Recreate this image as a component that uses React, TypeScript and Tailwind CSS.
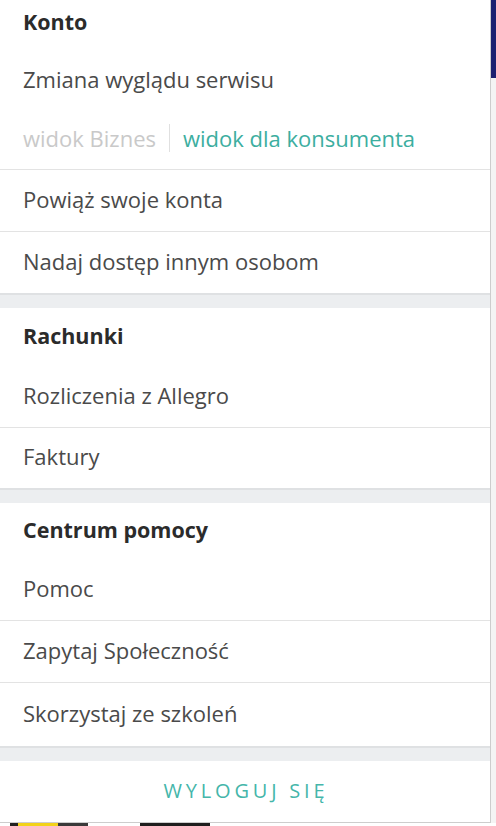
const rowText = "text-[22px] text-[#4a4a4a] pb-[4px]"

function Header({ label, className }: { label: string; className: string }) {
  return (
    <div className={`flex px-[23px] ${className}`}>
      <span className="text-[21.5px] font-bold text-[#2b2b2b]">{label}</span>
    </div>
  )
}

function Item({ label, className, divider = true }: { label: string; className: string; divider?: boolean }) {
  return (
    <a
      href="#"
      className={`flex items-center px-[23px] ${rowText} ${divider ? "border-b border-[#e3e3e3]" : ""} ${className}`}
    >
      {label}
    </a>
  )
}

function Band({ className }: { className: string }) {
  return <div className={`border-t-2 border-[#dfe1e3] bg-[#eceef0] ${className}`} />
}

export default function App() {
  return (
    <div className="flex h-[826px] w-[496px] flex-col overflow-hidden bg-white font-['Open_Sans',sans-serif] leading-none">
      <div className="flex h-[823px]">
        <nav className="flex w-[491px] flex-col border-r border-b border-[#cdcdcd] bg-white">
          <Header label="Konto" className="h-[52px] items-start pt-[11px]" />
          <div className={`flex h-[58px] items-center px-[23px] ${rowText}`}>Zmiana wyglądu serwisu</div>
          <div className="flex h-[60px] items-center border-b border-[#e3e3e3] px-[23px] pb-[4px] text-[22px]">
            <span className="text-[#c9c9c9]">widok Biznes</span>
            <span className="mx-[13px] h-[28px] w-px bg-[#e0e0e0]" />
            <span className="text-[#3cae9f]">widok dla konsumenta</span>
          </div>
          <Item label="Powiąż swoje konta" className="h-[62px]" />
          <Item label="Nadaj dostęp innym osobom" className="h-[61px]" divider={false} />
          <Band className="h-[15px]" />

          <Header label="Rachunki" className="h-[58px] items-center pb-[2px]" />
          <Item label="Rozliczenia z Allegro" className="h-[62px]" />
          <Item label="Faktury" className="h-[60px]" divider={false} />
          <Band className="h-[15px]" />

          <Header label="Centrum pomocy" className="h-[56px] items-center pb-[2px]" />
          <Item label="Pomoc" className="h-[62px]" />
          <Item label="Zapytaj Społeczność" className="h-[62px]" />
          <Item label="Skorzystaj ze szkoleń" className="h-[63px]" divider={false} />
          <Band className="h-[15px]" />

          <a
            href="#"
            className="flex flex-1 items-center justify-center pb-[2px] pl-[2px] text-[20px] tracking-[0.19em] text-[#45b6aa]"
          >
            WYLOGUJ SIĘ
          </a>
        </nav>
        <div className="flex flex-1 flex-col">
          <div className="h-[78px] bg-[#1c2070]" />
          <div className="flex-1 bg-[#f4f4f4]" />
        </div>
      </div>
      <div className="flex h-[3px] items-stretch">
        <div className="ml-[10px] w-[8px] bg-[#222]" />
        <div className="w-[40px] bg-[#f2d21a]" />
        <div className="w-[30px] bg-[#3a3a3a]" />
        <div className="ml-[52px] w-[70px] bg-[#1e1e1e]" />
      </div>
    </div>
  )
}
